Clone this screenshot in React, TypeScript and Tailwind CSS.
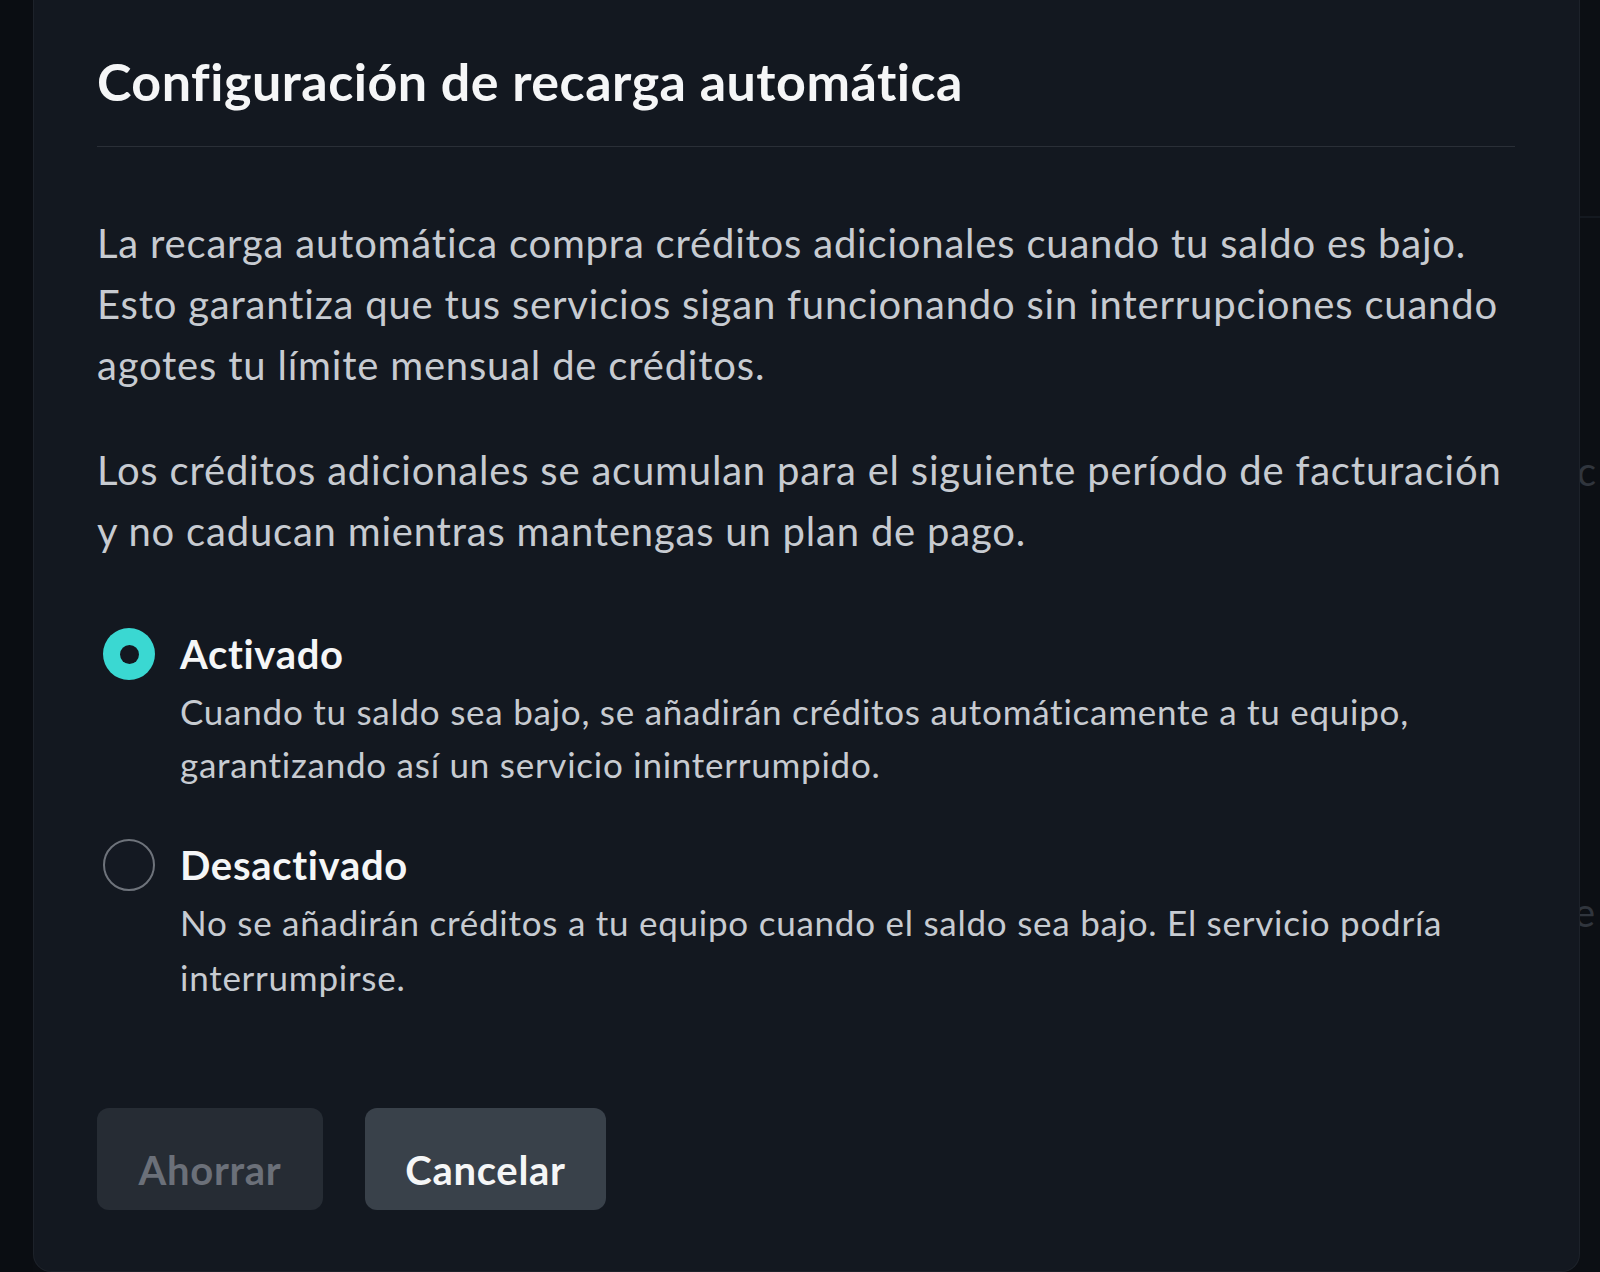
export default function App() {
  return (
    <div className="flex h-[1272px] w-[1600px] overflow-hidden bg-[#0b0e13] [font-family:Lato,'Noto_Sans',sans-serif]">
      <div className="w-[33px] shrink-0 bg-[#0a0d12]" />
      <div className="flex h-[1272px] w-[1547px] shrink-0 flex-col rounded-b-[18px] border-x border-b border-[#1d222a] bg-[#131820] pl-[63px] pr-[64px] pt-[46px]">
        <h1 className="border-b border-[#2a2f37] pb-[29px] text-[52px] font-bold leading-[71px] tracking-[0.5px] text-[#f5f6f7]">
          Configuración de recarga automática
        </h1>
        <p className="mt-[66px] text-[40px] leading-[61px] tracking-[0.8px] text-[#c7cbd1]">
          La recarga automática compra créditos adicionales cuando tu saldo es bajo.
          <br />
          Esto garantiza que tus servicios sigan funcionando sin interrupciones cuando
          <br />
          agotes tu límite mensual de créditos.
        </p>
        <p className="mt-[44px] text-[40px] leading-[61px] tracking-[0.8px] text-[#c7cbd1]">
          Los créditos adicionales se acumulan para el siguiente período de facturación
          <br />y no caducan mientras mantengas un plan de pago.
        </p>

        <div className="mt-[62px] flex flex-col gap-[44px]">
          <div className="flex">
            <div className="flex h-[60px] w-[83px] shrink-0 items-center">
              <div className="ml-[6px] flex h-[52px] w-[52px] items-center justify-center rounded-full bg-[#3ad8d2]">
                <div className="h-[19px] w-[19px] rounded-full bg-[#131820]" />
              </div>
            </div>
            <div className="flex flex-col">
              <div className="text-[40px] font-bold leading-[60px] tracking-[0.7px] text-[#f5f6f7]">Activado</div>
              <div className="mt-[1px] text-[35px] leading-[53px] tracking-[0.75px] text-[#c7cbd1]">
                Cuando tu saldo sea bajo, se añadirán créditos automáticamente a tu equipo,
                <br />
                garantizando así un servicio ininterrumpido.
              </div>
            </div>
          </div>

          <div className="flex">
            <div className="flex h-[60px] w-[83px] shrink-0 items-center">
              <div className="ml-[6px] h-[52px] w-[52px] rounded-full border-2 border-[#6e737b] bg-[#141922]" />
            </div>
            <div className="flex flex-col">
              <div className="text-[40px] font-bold leading-[60px] tracking-[0.7px] text-[#f5f6f7]">Desactivado</div>
              <div className="text-[35px] leading-[55px] tracking-[0.75px] text-[#c7cbd1]">
                No se añadirán créditos a tu equipo cuando el saldo sea bajo. El servicio podría
                <br />
                interrumpirse.
              </div>
            </div>
          </div>
        </div>

        <div className="mt-[103px] flex gap-[42px]">
          <button className="flex h-[102px] w-[226px] items-center justify-center rounded-[12px] bg-[#262c34] pt-[22px] text-[40px] font-bold tracking-[0.7px] text-[#6b7079]">
            Ahorrar
          </button>
          <button className="flex h-[102px] w-[241px] items-center justify-center rounded-[12px] bg-[#39414a] pt-[22px] text-[40px] font-bold tracking-[0.7px] text-[#f5f6f7]">
            Cancelar
          </button>
        </div>
      </div>
      <div className="flex w-[20px] shrink-0 flex-col overflow-hidden bg-[#0c0f14]">
        <div className="mt-[216px] h-[2px] w-full bg-[#141920]" />
        <div className="-ml-[3px] mt-[223px] text-[40px] leading-[61px] text-[#30353d]">c</div>
        <div className="-ml-[6px] mt-[380px] text-[40px] leading-[61px] text-[#30353d]">e</div>
      </div>
    </div>
  );
}
